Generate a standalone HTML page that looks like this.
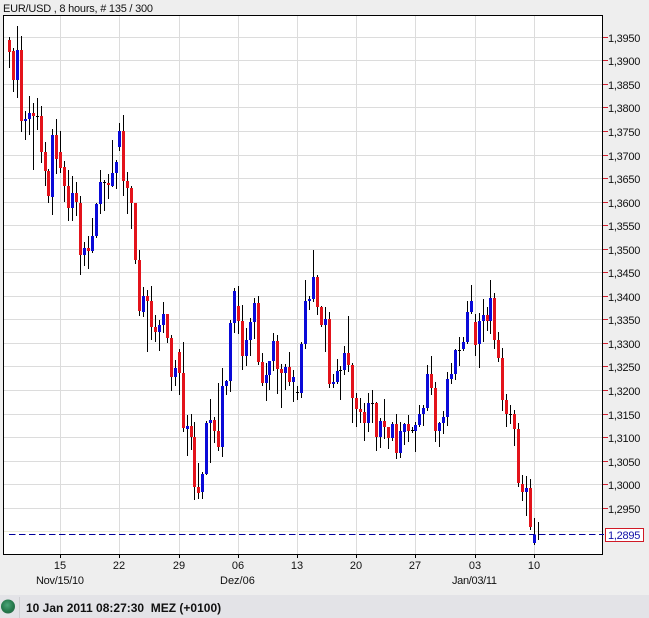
<!DOCTYPE html>
<html><head><meta charset="utf-8"><title>EUR/USD</title>
<style>html,body{margin:0;padding:0;background:#eee}svg{display:block}text{font-family:"Liberation Sans",Arial,sans-serif;font-size:11px;fill:#111}.p text{letter-spacing:-.25px}</style></head>
<body>
<svg width="649" height="618" viewBox="0 0 649 618" xmlns="http://www.w3.org/2000/svg">
<defs><radialGradient id="g" cx=".45" cy=".4" r=".65"><stop offset="0" stop-color="#4aa578"/><stop offset=".7" stop-color="#23774a"/><stop offset="1" stop-color="#2c6a4a"/></radialGradient></defs>
<rect width="649" height="618" fill="#eee"/>
<rect x="3" y="15" width="600" height="540" fill="#fff"/>
<path fill="none" stroke="#dcdcdc" d="M4 37.5H602M4 60.5H602M4 84.5H602M4 107.5H602M4 131.5H602M4 155.5H602M4 178.5H602M4 202.5H602M4 225.5H602M4 249.5H602M4 272.5H602M4 296.5H602M4 319.5H602M4 343.5H602M4 366.5H602M4 390.5H602M4 414.5H602M4 437.5H602M4 461.5H602M4 484.5H602M4 508.5H602M60.5 16V554M119.5 16V554M179.5 16V554M238.5 16V554M297.5 16V554M356.5 16V554M415.5 16V554M475.5 16V554M534.5 16V554"/>
<path fill="none" stroke="#ecebd8" d="M4 531.5H602"/>
<path fill="none" stroke="#000" d="M9.5 37V68M13.5 48V92M17.5 26V98M21.5 36V132M25.5 111V140M29.5 96V135M33.5 103V170M37.5 98V130M41.5 106V163M45.5 142V186M48.5 169V203M52.5 129V215M56.5 119V174M60.5 131V173M64.5 161V202M68.5 170V221M72.5 176V221M76.5 182V216M80.5 196V275M84.5 242V266M88.5 236V269M92.5 218V253M96.5 203V238M100.5 170V214M104.5 180V211M108.5 174V199M112.5 140V187M116.5 160V189M119.5 123V151M123.5 115V196M127.5 172V214M131.5 186V229M135.5 203V264M139.5 250V316M143.5 287V317M147.5 290V352M151.5 286V340M155.5 315V342M159.5 320V351M163.5 302V333M167.5 314V343M171.5 335V391M175.5 360V386M179.5 349V395M183.5 342V432M187.5 415V456M191.5 414V450M194.5 422V500M198.5 463V499M202.5 472V499M206.5 421V475M210.5 399V463M214.5 417V443M218.5 383V451M222.5 368V457M226.5 380V395M230.5 320V392M234.5 288V333M238.5 286V334M242.5 305V370M246.5 328V366M250.5 318V356M254.5 298V339M258.5 296V365M262.5 353V386M266.5 363V401M269.5 361V390M273.5 333V371M277.5 335V394M281.5 364V408M285.5 364V390M289.5 352V386M293.5 370V402M297.5 386V400M301.5 342V398M305.5 280V349M309.5 296V310M313.5 250V302M317.5 275V315M321.5 306V327M325.5 307V352M329.5 312V388M333.5 374V388M337.5 359V384M340.5 366V400M344.5 346V375M348.5 316V372M352.5 363V423M356.5 393V427M360.5 398V423M364.5 403V441M368.5 393V432M372.5 390V423M376.5 402V451M380.5 418V448M384.5 399V439M388.5 427V449M392.5 422V441M396.5 414V459M400.5 422V458M404.5 423V445M408.5 415V442M412.5 427V433M415.5 422V452M419.5 405V427M423.5 405V426M427.5 365V411M431.5 356V395M435.5 382V442M439.5 422V447M443.5 411V434M447.5 372V426M451.5 363V384M455.5 349V380M459.5 337V366M463.5 337V351M467.5 301V344M471.5 285V314M475.5 314V356M479.5 313V368M483.5 299V342M487.5 307V331M490.5 280V334M494.5 293V349M498.5 332V362M502.5 348V411M506.5 394V427M510.5 405V424M514.5 410V446M518.5 423V487M522.5 475V501M526.5 476V516M530.5 479V530M534.5 518V545M538.5 522V540M36 116.5H39M103 182.5H106M296 392.5H299M339 370.5H342M371 403.5H374M411 430.5H414M458 350.5H461M509 414.5H512"/>
<path fill="none" stroke="#e3131b" stroke-width="3" d="M9.5 40V52M13.5 51V80M21.5 50V121M33.5 113V116M41.5 116V152M45.5 152V171M48.5 171V196M56.5 135V159M60.5 152V168M64.5 167V186M68.5 186V208M76.5 193V202M80.5 203V255M88.5 248V251M108.5 183V185M123.5 131V181M127.5 181V188M131.5 188V203M135.5 203V260M139.5 260V311M147.5 296V301M151.5 301V327M155.5 327V332M167.5 314V338M171.5 338V377M179.5 352V373M183.5 373V428M191.5 426V437M194.5 437V487M198.5 487V493M214.5 420V431M218.5 431V447M238.5 306V321M242.5 321V356M258.5 303V362M262.5 362V383M277.5 341V369M281.5 369V373M289.5 367V382M317.5 277V307M321.5 307V325M329.5 319V384M348.5 353V365M352.5 365V398M356.5 398V409M360.5 409V412M364.5 412V423M376.5 403V437M384.5 421V427M388.5 427V438M396.5 424V453M408.5 424V431M431.5 374V388M435.5 388V431M475.5 322V345M487.5 315V321M494.5 298V340M498.5 340V358M502.5 358V400M506.5 400V414M514.5 414V429M518.5 429V483M522.5 484V492M530.5 488V527"/>
<path fill="none" stroke="#0a0ad8" stroke-width="3" d="M17.5 50V80M25.5 119V121M29.5 113V119M52.5 135V197M72.5 193V208M84.5 248V255M92.5 236V251M96.5 204V236M100.5 182V204M112.5 173V186M116.5 162V173M119.5 131V147M143.5 296V312M159.5 325V332M163.5 314V325M175.5 368V377M187.5 426V429M202.5 474V492M206.5 423V474M210.5 420V423M222.5 386V447M226.5 381V386M230.5 323V381M234.5 291V323M246.5 340V356M250.5 322V340M254.5 303V322M266.5 375V383M269.5 361V375M273.5 341V361M285.5 367V373M293.5 377V382M301.5 344V393M305.5 301V344M309.5 299V301M313.5 277V299M325.5 319V325M333.5 382V384M337.5 371V382M344.5 353V370M368.5 403V423M380.5 421V437M392.5 424V438M400.5 431V453M404.5 424V432M415.5 425V431M419.5 414V425M423.5 408V414M427.5 374V408M439.5 423V431M443.5 417V423M447.5 379V417M451.5 374V379M455.5 350V374M463.5 342V349M467.5 312V342M471.5 301V312M479.5 321V344M483.5 315V321M490.5 298V321M526.5 488V492M534.5 535V543"/>
<path fill="none" stroke="#000" d="M3.5 15V554.5H602.5V15.5H3M60.5 555V558M119.5 555V558M179.5 555V558M238.5 555V558M297.5 555V558M356.5 555V558M415.5 555V558M475.5 555V558M534.5 555V558"/>
<path fill="none" stroke="#00009a" stroke-dasharray="6.5 3.5" d="M9 534.5H604"/>
<path fill="none" stroke="#d02030" d="M603 37.5h5M603 60.5h5M603 84.5h5M603 107.5h5M603 131.5h5M603 155.5h5M603 178.5h5M603 202.5h5M603 225.5h5M603 249.5h5M603 272.5h5M603 296.5h5M603 319.5h5M603 343.5h5M603 366.5h5M603 390.5h5M603 414.5h5M603 437.5h5M603 461.5h5M603 484.5h5M603 508.5h5"/>
<text x="3" y="12" textLength="150" lengthAdjust="spacing">EUR/USD , 8 hours, # 135 / 300</text>
<g class="p"><text x="608" y="42">1,3950</text><text x="608" y="65">1,3900</text><text x="608" y="89">1,3850</text><text x="608" y="112">1,3800</text><text x="608" y="136">1,3750</text><text x="608" y="160">1,3700</text><text x="608" y="183">1,3650</text><text x="608" y="207">1,3600</text><text x="608" y="230">1,3550</text><text x="608" y="254">1,3500</text><text x="608" y="277">1,3450</text><text x="608" y="301">1,3400</text><text x="608" y="324">1,3350</text><text x="608" y="348">1,3300</text><text x="608" y="371">1,3250</text><text x="608" y="395">1,3200</text><text x="608" y="419">1,3150</text><text x="608" y="442">1,3100</text><text x="608" y="466">1,3050</text><text x="608" y="489">1,3000</text><text x="608" y="513">1,2950</text></g>
<rect x="605.5" y="528.5" width="38" height="13" fill="#fff" stroke="#d01a26"/>
<g class="p"><text x="608" y="539" style="fill:#1010a8">1,2895</text></g>
<g text-anchor="middle"><text x="60" y="569">15</text><text x="119" y="569">22</text><text x="179" y="569">29</text><text x="238" y="569">06</text><text x="297" y="569">13</text><text x="356" y="569">20</text><text x="415" y="569">27</text><text x="475" y="569">03</text><text x="534" y="569">10</text></g>
<text x="36" y="584" textLength="48">Nov/15/10</text><text x="220" y="584">Dez/06</text><text x="452" y="584" textLength="45">Jan/03/11</text>
<rect y="595" width="649" height="23" fill="#e3e3e7"/>
<path stroke="#cfcfd3" d="M19.5 597V618"/>
<circle cx="8" cy="606.5" r="7" fill="url(#g)"/>
<text x="26" y="612" style="font-size:12px;font-weight:bold;fill:#111" xml:space="preserve">10 Jan 2011 08:27:30  MEZ (+0100)</text>
</svg>
</body></html>
